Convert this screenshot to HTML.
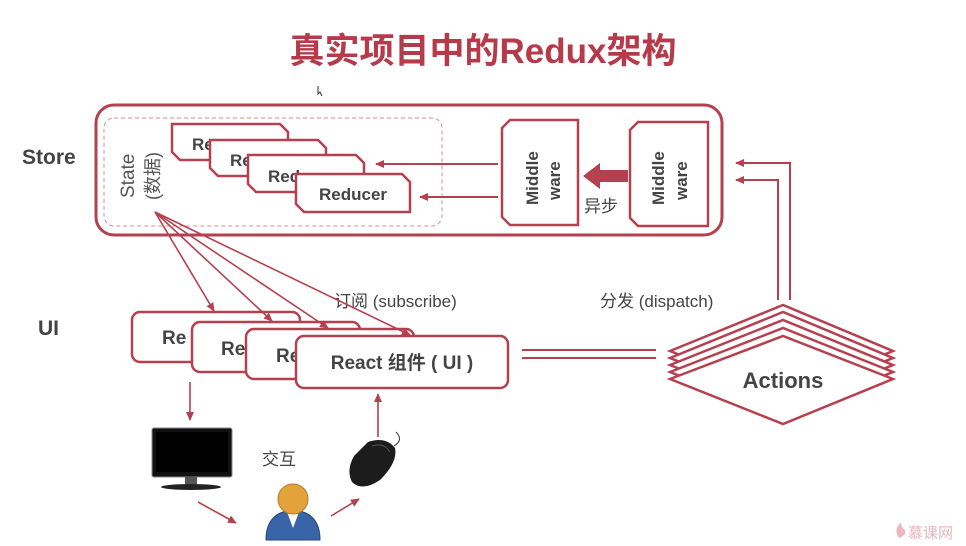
<!DOCTYPE html>
<html><head><meta charset="utf-8"><style>
html,body{margin:0;padding:0;background:#fff;width:966px;height:546px;overflow:hidden}
text{font-family:"Liberation Sans","Noto Sans CJK SC",sans-serif}
</style></head><body>
<svg width="966" height="546" viewBox="0 0 966 546" xmlns="http://www.w3.org/2000/svg">
<defs>
<marker id="ah" markerWidth="10" markerHeight="10" refX="8" refY="5" orient="auto" markerUnits="userSpaceOnUse"><path d="M0,1 L9,5 L0,9 z" fill="#b5404f"/></marker>
</defs>
<text x="483" y="63" text-anchor="middle" font-size="35" font-weight="bold" fill="#b73a4a">真实项目中的Redux架构</text>
<path d="M318,86 l0,8 l2,-2 l2,4" stroke="#333" fill="none" stroke-width="1"/>

<rect x="96" y="105" width="626" height="130" rx="18" fill="#fff" stroke="#b5404f" stroke-width="3"/>
<rect x="104" y="118" width="338" height="108" rx="10" fill="none" stroke="#d88a95" stroke-width="1" stroke-dasharray="4,3"/>
<text x="22" y="164" font-size="21" font-weight="bold" fill="#444">Store</text>
<text transform="translate(134,198) rotate(-90)" font-size="19" fill="#555">State</text>
<text transform="translate(159,200) rotate(-90)" font-size="18" fill="#555">(数据)</text>

<g fill="#fff" stroke="#b5404f" stroke-width="2.5" font-weight="bold" font-size="17">
<path d="M172,124 H280 L288,132 V160 H180 L172,152 Z"/>
<text x="192" y="150" fill="#444" stroke="none">Re</text>
<path d="M210,140 H318 L326,148 V176 H218 L210,168 Z"/>
<text x="230" y="166" fill="#444" stroke="none">Re</text>
<path d="M248,155 H356 L364,163 V192 H256 L248,184 Z"/>
<text x="268" y="182" fill="#444" stroke="none">Red</text>
<path d="M296,174 H402 L410,182 V212 H304 L296,204 Z"/>
<text x="353" y="200" text-anchor="middle" fill="#444" stroke="none">Reducer</text>
</g>

<g fill="#fff" stroke="#b5404f" stroke-width="2.5">
<path d="M510,120 H578 V225 H510 L502,217 V128 Z"/>
<path d="M638,122 H708 V226 H638 L630,218 V130 Z"/>
</g>
<g font-size="17" font-weight="bold" fill="#444">
<text transform="translate(538,205) rotate(-90)">Middle</text>
<text transform="translate(560,200) rotate(-90)">ware</text>
<text transform="translate(664,205) rotate(-90)">Middle</text>
<text transform="translate(687,200) rotate(-90)">ware</text>
</g>
<path d="M628,170 H600 V163 L583,176 L600,189 V182 H628 Z" fill="#b5404f"/>
<text x="584" y="212" font-size="17" fill="#444">异步</text>
<line x1="498" y1="164" x2="376" y2="164" stroke="#b5404f" stroke-width="2" marker-end="url(#ah)"/>
<line x1="498" y1="197" x2="420" y2="197" stroke="#b5404f" stroke-width="2" marker-end="url(#ah)"/>

<path d="M778,300 V180 H736" fill="none" stroke="#b5404f" stroke-width="2" marker-end="url(#ah)"/>
<path d="M790,300 V163 H736" fill="none" stroke="#b5404f" stroke-width="2" marker-end="url(#ah)"/>

<text x="38" y="335" font-size="21" font-weight="bold" fill="#444">UI</text>
<text x="334" y="307" font-size="17" fill="#444">订阅 (subscribe)</text>
<text x="600" y="307" font-size="17" fill="#444">分发 (dispatch)</text>

<g fill="#fff" stroke="#b5404f" stroke-width="2.5" font-weight="bold" font-size="19">
<rect x="132" y="312" width="168" height="50" rx="8"/>
<text x="162" y="344" fill="#444" stroke="none">Re</text>
<rect x="192" y="322" width="168" height="50" rx="8"/>
<text x="221" y="355" fill="#444" stroke="none">Re</text>
<rect x="246" y="329" width="168" height="50" rx="8"/>
<text x="276" y="362" fill="#444" stroke="none">Re</text>
<rect x="296" y="336" width="212" height="52" rx="8"/>
<text x="402" y="369" text-anchor="middle" fill="#444" stroke="none">React 组件 ( UI )</text>
</g>

<g stroke="#b5404f" stroke-width="1.6" fill="none" marker-end="url(#ah)">
<line x1="155" y1="212" x2="214" y2="311"/>
<line x1="155" y1="212" x2="272" y2="321"/>
<line x1="155" y1="212" x2="328" y2="328"/>
<line x1="155" y1="212" x2="410" y2="335"/>
</g>

<line x1="522" y1="350" x2="656" y2="350" stroke="#b5404f" stroke-width="2"/>
<line x1="522" y1="358" x2="656" y2="358" stroke="#b5404f" stroke-width="2"/>

<g fill="#fff" stroke="#b5404f" stroke-width="2.5">
<path d="M670,351 L783,305 L893,351 L783,396 Z"/>
<path d="M670,358 L783,312 L893,358 L783,403 Z"/>
<path d="M670,365 L783,320 L893,365 L783,410 Z"/>
<path d="M670,372 L783,328 L893,372 L783,417 Z"/>
<path d="M670,379 L783,336 L893,379 L783,424 Z"/>
</g>
<text x="783" y="388" text-anchor="middle" font-size="22" font-weight="bold" fill="#444">Actions</text>

<line x1="190" y1="382" x2="190" y2="420" stroke="#b5404f" stroke-width="1.6" marker-end="url(#ah)"/>
<line x1="378" y1="437" x2="378" y2="394" stroke="#b5404f" stroke-width="1.6" marker-end="url(#ah)"/>
<line x1="198" y1="502" x2="236" y2="523" stroke="#b5404f" stroke-width="1.6" marker-end="url(#ah)"/>
<line x1="331" y1="516" x2="359" y2="499" stroke="#b5404f" stroke-width="1.6" marker-end="url(#ah)"/>

<rect x="152" y="428" width="80" height="49" rx="2" fill="#111" stroke="#888" stroke-width="1"/>
<rect x="156" y="432" width="72" height="40" fill="#000"/>
<rect x="185" y="477" width="12" height="8" fill="#555"/>
<ellipse cx="191" cy="487" rx="30" ry="3" fill="#222"/>

<text x="262" y="465" font-size="17" fill="#444">交互</text>

<path d="M266,540 Q266,512 293,510 Q320,512 320,540 Z" fill="#3a64a8" stroke="#24467d"/>
<path d="M287,512 L293,528 L299,512 Z" fill="#fff"/>
<circle cx="293" cy="499" r="15" fill="#e3a33b" stroke="#b9792a"/>

<path d="M368,442 Q386,436 395,448 Q398,462 380,480 Q362,492 352,482 Q346,470 354,456 Z" fill="#1c1c1c"/>
<path d="M372,446 Q384,442 390,452" stroke="#555" fill="none"/>
<path d="M394,446 Q404,440 396,432" stroke="#333" fill="none"/>

<text x="908" y="538" font-size="15" fill="#e8b5bb">慕课网</text>
<path d="M899,538 q-6,-8 2,-16 q0,6 4,8 q2,5 -6,8z" fill="#ebb8bf"/>
</svg>
</body></html>
